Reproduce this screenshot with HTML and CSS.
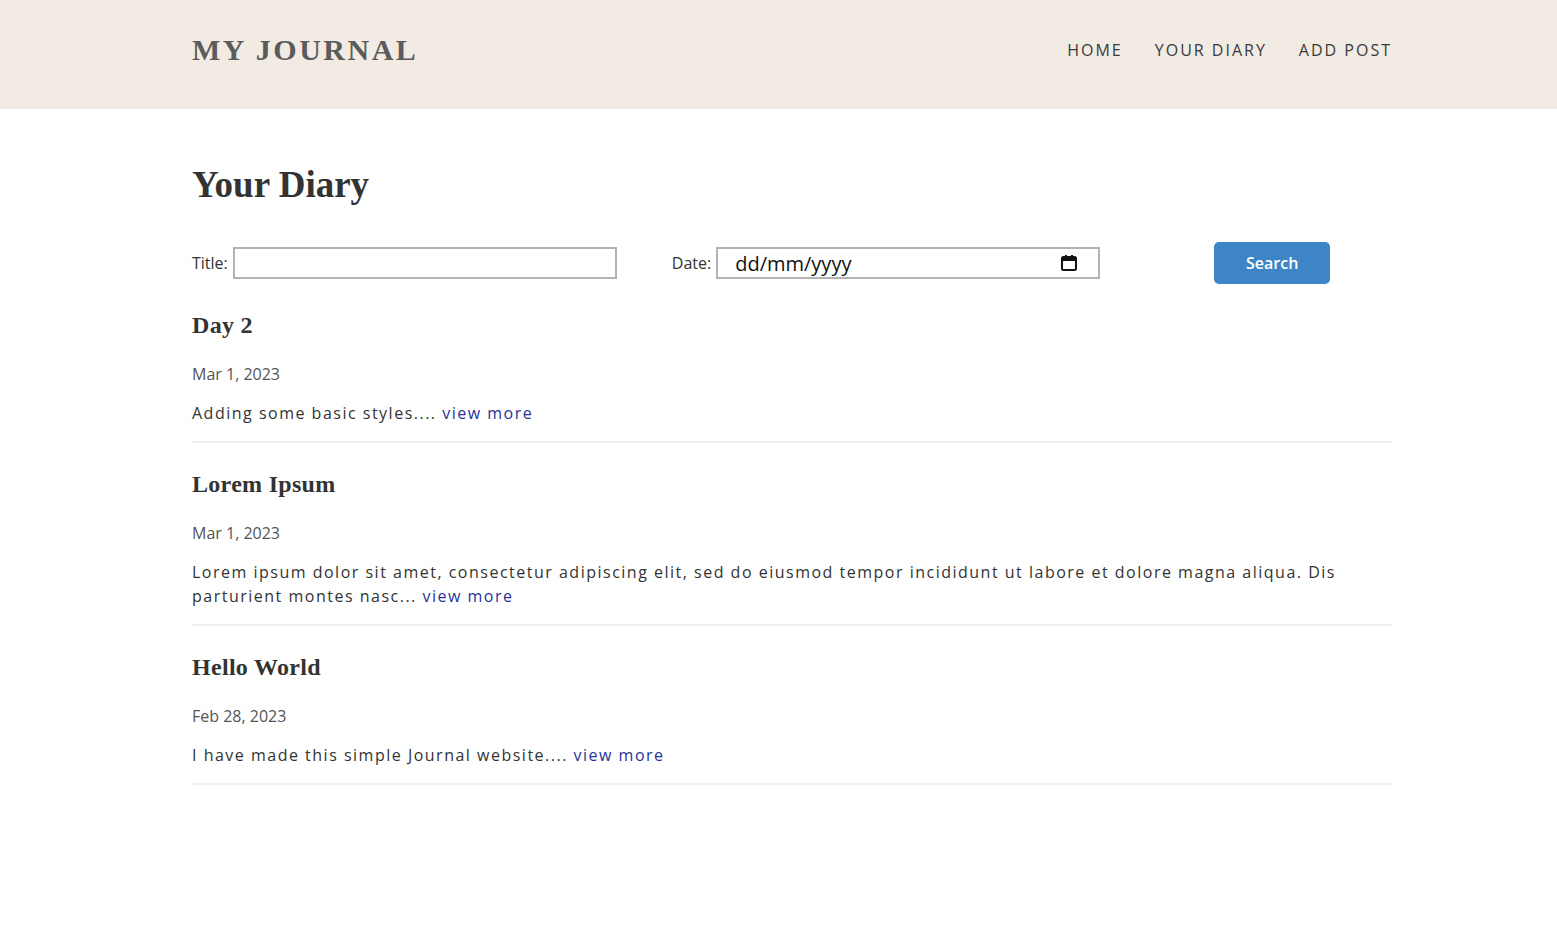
FILE: index.html
```html
<!DOCTYPE html>
<html lang="en">
<head>
<meta charset="utf-8">
<title>My Journal</title>
<link rel="stylesheet" href="styles.css">
</head>
<body>
<header class="site-header">
  <div class="container header-inner">
    <a class="brand" href="#">MY JOURNAL</a>
    <nav class="nav">
      <a href="#">HOME</a>
      <a href="#">YOUR DIARY</a>
      <a href="#">ADD POST</a>
    </nav>
  </div>
</header>
<main class="container">
  <h1 class="page-title">Your Diary</h1>
  <form class="search-form">
    <label class="field field-title">Title:<input class="text-input" type="text"></label>
    <label class="field field-date">Date:<span class="date-box"><input class="date-input" type="text" placeholder="dd/mm/yyyy"><svg class="cal-icon" width="18" height="18" viewBox="0 0 18 18"><rect x="2" y="3" width="14" height="13" rx="1.5" fill="none" stroke="#111" stroke-width="2"/><rect x="2" y="3" width="14" height="4" fill="#111"/><rect x="5" y="1" width="2" height="3" fill="#111"/><rect x="11" y="1" width="2" height="3" fill="#111"/></svg></span></label>
    <button class="search-btn" type="button">Search</button>
  </form>

  <article class="post">
    <h2 class="post-title">Day 2</h2>
    <p class="post-date">Mar 1, 2023</p>
    <p class="post-body">Adding some basic styles.... <a href="#">view more</a></p>
  </article>
  <article class="post">
    <h2 class="post-title">Lorem Ipsum</h2>
    <p class="post-date">Mar 1, 2023</p>
    <p class="post-body">Lorem ipsum dolor sit amet, consectetur adipiscing elit, sed do eiusmod tempor incididunt ut labore et dolore magna aliqua. Dis parturient montes nasc... <a href="#">view more</a></p>
  </article>
  <article class="post">
    <h2 class="post-title">Hello World</h2>
    <p class="post-date">Feb 28, 2023</p>
    <p class="post-body">I have made this simple Journal website.... <a href="#">view more</a></p>
  </article>
</main>
</body>
</html>
```

FILE: styles.css
```css
* { box-sizing: border-box; }
body {
  margin: 0;
  font-family: "Open Sans", "Liberation Sans", sans-serif;
  font-size: 16px;
  color: #333;
  background: #fff;
}
.container {
  width: 1200px;
  margin-left: 192px;
}
.site-header {
  background: #f1ebe3;
  height: 109px;
}
.header-inner {
  height: 100%;
  display: flex;
  align-items: center;
  justify-content: space-between;
  padding-bottom: 9px;
}
.brand {
  font-family: "Liberation Serif", "Times New Roman", serif;
  font-weight: 700;
  font-size: 30px;
  letter-spacing: 2.5px;
  color: #5b5b5b;
  text-decoration: none;
}
.nav {
  display: flex;
  gap: 32px;
}
.nav a {
  font-size: 16px;
  letter-spacing: 2px;
  color: #3a3a3a;
  text-decoration: none;
}
.page-title {
  font-family: "Liberation Serif", "Times New Roman", serif;
  font-weight: 700;
  font-size: 37px;
  line-height: 48px;
  color: #333;
  margin: 52px 0 33px;
}
.search-form {
  display: flex;
  align-items: center;
  height: 42px;
  margin-bottom: 26px;
}
.field {
  display: flex;
  align-items: center;
  font-size: 16px;
  color: #333;
}
.field-date { margin-left: 55px; }
.text-input {
  margin-left: 5px;
  width: 384px;
  height: 32px;
  border: 2px solid #b3b3b3;
  padding: 0 6px;
  font-size: 16px;
  font-family: inherit;
  outline: none;
}
.date-box {
  margin-left: 5px;
  width: 384px;
  height: 32px;
  border: 2px solid #b3b3b3;
  display: flex;
  align-items: center;
  padding: 0 20px 0 17px;
}
.date-input {
  flex: 1;
  border: 0;
  outline: none;
  padding: 0;
  font-family: "Open Sans", sans-serif;
  font-size: 20px;
  color: #111;
  min-width: 0;
}
.date-input::placeholder { color: #111; opacity: 1; }
.cal-icon { flex: none; }
.search-btn {
  margin-left: 114px;
  width: 116px;
  height: 42px;
  border: 0;
  border-radius: 5px;
  background: #3d85c6;
  color: #fff;
  font-family: "Open Sans", sans-serif;
  font-weight: 600;
  font-size: 16px;
}
.post {
  border-bottom: 2px solid #efefef;
  margin-bottom: 26px;
}
.post-title {
  font-family: "Liberation Serif", "Times New Roman", serif;
  font-weight: 700;
  font-size: 24px;
  line-height: 30px;
  letter-spacing: 0.3px;
  color: #333;
  margin: 0 0 22px;
}
.post-date {
  margin: 0 0 15px;
  line-height: 24px;
  color: #555;
}
.post-body {
  margin: 0 0 16px;
  line-height: 24px;
  letter-spacing: 1.5px;
  color: #333;
}
.post-body a {
  color: #26339a;
  text-decoration: none;
}
```
